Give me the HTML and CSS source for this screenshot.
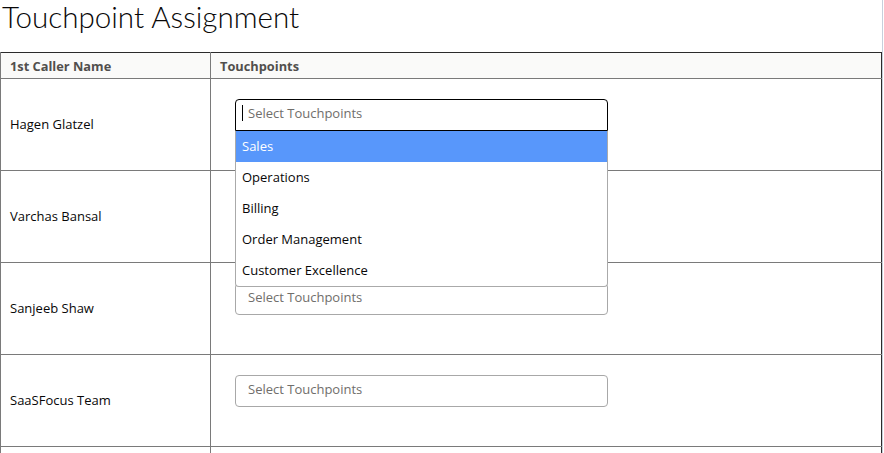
FILE: index.html
```html
<!DOCTYPE html>
<html>
<head>
<meta charset="utf-8">
<link rel="stylesheet" href="styles.css">
</head>
<body>
<div class="page">
  <h1 class="title">Touchpoint Assignment</h1>
  <table class="grid">
    <colgroup><col class="c1"><col class="c2"></colgroup>
    <thead>
      <tr><th>1st Caller Name</th><th>Touchpoints</th></tr>
    </thead>
    <tbody>
      <tr>
        <td class="name">Hagen Glatzel</td>
        <td class="tp">
          <div class="select focused">
            <span class="caret"></span><span class="ph">Select Touchpoints</span>
            <ul class="dropdown">
              <li class="hl">Sales</li>
              <li>Operations</li>
              <li>Billing</li>
              <li>Order Management</li>
              <li>Customer Excellence</li>
            </ul>
          </div>
        </td>
      </tr>
      <tr>
        <td class="name">Varchas Bansal</td>
        <td class="tp"><div class="select"><span class="ph">Select Touchpoints</span></div></td>
      </tr>
      <tr>
        <td class="name">Sanjeeb Shaw</td>
        <td class="tp"><div class="select"><span class="ph">Select Touchpoints</span></div></td>
      </tr>
      <tr>
        <td class="name">SaaSFocus Team</td>
        <td class="tp"><div class="select"><span class="ph">Select Touchpoints</span></div></td>
      </tr>
      <tr>
        <td class="name">&nbsp;</td>
        <td class="tp"></td>
      </tr>
    </tbody>
  </table>
</div>
</body>
</html>
```
FILE: styles.css
```css
html, body { margin: 0; padding: 0; background: #fff; }
body { font-family: "Open Sans", "Noto Sans", sans-serif; color: #080707; overflow: hidden; height: 453px; }
.page { width: 883px; border-right: 1px solid #c7d0dc; height: 453px; box-sizing: border-box; overflow: hidden; }
.title {
  margin: 0;
  padding: 0 0 0 2px;
  height: 52px;
  font-family: Lato, "Open Sans", sans-serif;
  font-weight: 300;
  font-size: 29.6px;
  line-height: 34px;
  color: #080707;
}
.grid {
  border-collapse: collapse;
  table-layout: fixed;
  width: 882px;
  border-top: 1px solid #2b2b2b;
  border-left: 1px solid #2b2b2b;
  border-right: 1px solid #2b2b2b;
}
.c1 { width: 210px; }
.grid th {
  background: #fafaf9;
  height: 25px;
  padding: 0 0 0 9px;
  text-align: left;
  font-size: 12.8px;
  font-weight: 700;
  color: #514f4d;
  border-bottom: 1px solid #7a7a7a;
  border-left: 1px solid #7a7a7a;
}
.grid td {
  height: 92px;
  padding: 0;
  box-sizing: border-box;
  border-bottom: 1px solid #7a7a7a;
  border-left: 1px solid #7a7a7a;
  vertical-align: top;
  font-size: 13px;
}
.grid td.name { padding: 0 0 1px 9px; vertical-align: middle; color: #080707; }
.grid td.tp { padding: 20px 0 0 24px; }
.select {
  position: relative;
  width: 373px;
  height: 32px;
  box-sizing: border-box;
  border: 1px solid #a8a8a8;
  border-radius: 4px;
  display: flex;
  align-items: center;
  padding: 0 0 5px 12px;
  font-size: 13px;
}
.select.focused { border-color: #000; border-radius: 4px 4px 0 0; padding-left: 6px; }
.caret { display: inline-block; width: 1px; height: 16px; background: #000; margin-right: 5px; }
.ph { color: #706e6b; }
.dropdown {
  position: absolute;
  left: -1px;
  top: 31px;
  width: 373px;
  box-sizing: border-box;
  margin: 0;
  padding: 0;
  list-style: none;
  background: #fff;
  border: 1px solid #aaa;
  border-top: none;
  border-radius: 0 0 4px 4px;
  z-index: 2;
}
.dropdown li {
  height: 31px;
  line-height: 30px;
  padding-left: 6px;
  font-size: 13px;
  color: #080707;
}
.dropdown li.hl { background: #5897fb; color: #fff; }
```
